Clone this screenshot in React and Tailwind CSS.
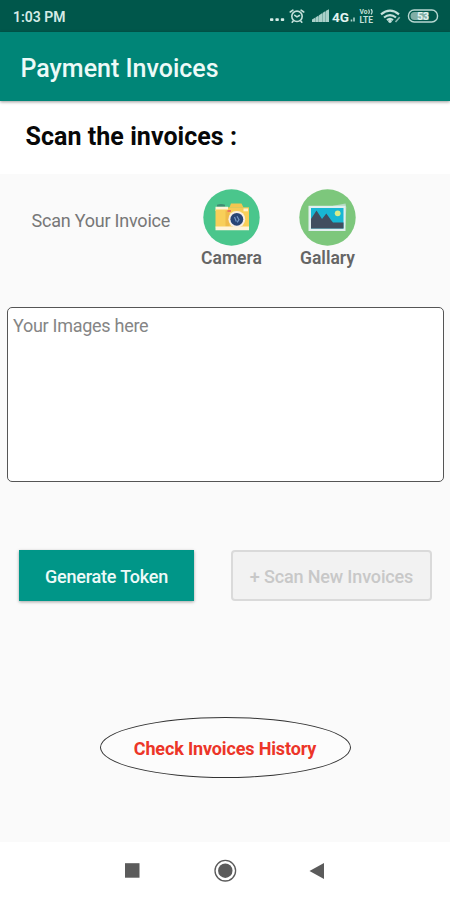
import React from 'react';

// Small system icons on the right of the status bar
function StatusIcons() {
  return (
    <svg width="170" height="20" viewBox="0 0 170 20" fill="none" className="font-['Roboto',sans-serif]">
      {/* notification dots */}
      <g fill="#d5ebe6">
        <rect x="1" y="9.3" width="3.4" height="2.8" rx="0.8" />
        <rect x="6.4" y="9.3" width="3.4" height="2.8" rx="0.8" />
        <rect x="11.8" y="9.3" width="3.4" height="2.8" rx="0.8" />
      </g>
      {/* alarm */}
      <g stroke="#c3e0da" strokeWidth="1.6" strokeLinecap="round">
        <circle cx="28" cy="7.3" r="5.2" />
        <path d="M25.8 6.3l2.2 1.6 2.4-1.4M21.3 3l2.6-1.9M34.7 3l-2.6-1.9M24.2 12l-1 1.2M31.8 12l1 1.2" />
      </g>
      {/* signal bars */}
      <path d="M43 13v-2.6l3-1.7V13zM46.5 13V8.4l3-1.9V13zM50 13V6.2l3-1.9V13zM53.5 13V4l3-1.9V13zM57 13V1.8l3-1.6V13z" fill="#a9d0c9" />
      <path d="M43 13v-1.5L60 1v12z" fill="#a9d0c9" fillOpacity="0.5" />
      <text x="63" y="12.5" fontSize="13.5" fontWeight="700" fill="#e3f3f0" textLength="17" lengthAdjust="spacingAndGlyphs">4G</text>
      <path d="M82.5 12.5v-2M85 12.5v-4" stroke="#a9d0c9" strokeWidth="1.6" />
      {/* VoLTE badge */}
      <text x="90.5" y="5" fontSize="6.5" fontWeight="700" fill="#c3e0da" textLength="8" lengthAdjust="spacingAndGlyphs">Vo</text>
      <path d="M99.5 0.5q1.6 2.2 0 4.4M102 0q2.2 2.7 0 5.4" stroke="#c3e0da" strokeWidth="1.2" />
      <text x="90.5" y="13.6" fontSize="8.5" fontWeight="700" fill="#c3e0da" textLength="13.5" lengthAdjust="spacingAndGlyphs">LTE</text>
      {/* wifi */}
      <g stroke="#c3e0da" strokeWidth="2.2">
        <path d="M112 5.4Q121 -2 130 5.4" />
        <path d="M115 8.5Q121 3.7 127 8.5" />
        <path d="M118 11.2Q121 8.7 124 11.2" />
        <path d="M126.5 13l4.2-4.8" strokeWidth="1.6" strokeOpacity="0.7" />
      </g>
      <circle cx="121" cy="12.3" r="1.7" fill="#c3e0da" />
      {/* battery */}
      <rect x="139.5" y="1" width="29" height="12" rx="5.6" stroke="#b8d8d2" strokeWidth="1.4" />
      <path d="M145.5 3h14v8h-14a4 4 0 0 1 0-8z" fill="#80aea6" />
      <text x="148" y="11" fontSize="11" fontWeight="700" fill="#e3f3f0" textLength="12" lengthAdjust="spacingAndGlyphs">53</text>
    </svg>
  );
}

function CameraIcon() {
  return (
    <svg width="57" height="57" viewBox="0 0 57 57">
      <circle cx="28.5" cy="28.5" r="28.2" fill="#4ac68c" />
      <path d="M14 15.8q4-1.6 8 0v2h-8z" fill="#3f8c72" />
      <path d="M26.5 18.5l1.5-4h10.5l2 4z" fill="#f2c650" />
      <path d="M12.5 17.8H25V21h-3v1H12.5z" fill="#fff4d9" />
      <rect x="12.5" y="20.5" width="33.5" height="18" fill="#f8cf59" />
      <path d="M25 18.3h21v3.2H25z" fill="#f6ca57" />
      <path d="M22.5 21.5h4v16h-4z" fill="#efbb4a" />
      <path d="M12.5 37.5H46v3.8H12.5z" fill="#fff4d9" />
      <rect x="24.5" y="21" width="3.5" height="2" fill="#ec765b" />
      <rect x="40.5" y="19.5" width="4.5" height="2.8" fill="#fff1c9" />
      <circle cx="33.8" cy="30.3" r="8.4" fill="#f8eee2" />
      <circle cx="33.8" cy="30.3" r="6.4" fill="#294575" />
      <path d="M31.5 28l1.8 4.5M34 27.2l2 3.5-1.8 2.6" fill="none" stroke="#7397c4" strokeWidth="1.2" />
    </svg>
  );
}

function GalleryIcon() {
  return (
    <svg width="57" height="57" viewBox="0 0 57 57">
      <circle cx="28.5" cy="28.5" r="28.2" fill="#7dc77c" />
      <path d="M34 16.8l12.5-2.3.8 4-1 18z" fill="#b5dbc4" />
      <rect x="9.5" y="16.8" width="37" height="25.2" fill="#e1efef" />
      <rect x="12" y="19" width="32.5" height="20.5" fill="#18b7d3" />
      <circle cx="38.7" cy="24.3" r="2.9" fill="#d6ec8a" />
      <path d="M12 39.5V30l5.5-8.5 5.5 8.5 4.3-5.5 4.7 6.5 2 2.5h10.5v6z" fill="#414e5f" />
    </svg>
  );
}

function ScanSource({ icon, label }) {
  return (
    <button className="flex w-[76px] flex-col items-center">
      {icon}
      <span className="text-[17.5px] leading-6 font-semibold text-[#656565]">{label}</span>
    </button>
  );
}

export default function App() {
  return (
    <div className="flex h-[900px] w-[450px] flex-col overflow-hidden bg-[#fafafa] font-['Roboto',sans-serif]">
      {/* Status bar */}
      <div className="flex h-8 shrink-0 items-start justify-between bg-[#00574b] pl-[13px] pr-[11px]">
        <span className="pt-[7px] text-[14px] leading-5 font-semibold text-[#d5ebe6]">1:03 PM</span>
        <div className="pt-[9px]">
          <StatusIcons />
        </div>
      </div>

      {/* App bar */}
      <header className="z-10 flex h-[69px] shrink-0 items-center bg-[#008577] pt-[5px] pl-[20.5px] shadow-[0_1px_3px_rgba(0,0,0,0.4)]">
        <h1 className="text-[25px] font-medium text-[#edfaf8]">Payment Invoices</h1>
      </header>

      <div className="flex h-[73px] shrink-0 items-center bg-white pb-[2px] pl-[25.5px]">
        <h2 className="text-[25px] font-bold tracking-[0.05px] text-[#080808]">Scan the invoices :</h2>
      </div>

      <main className="flex flex-1 flex-col">
        <div className="flex h-[133px] shrink-0 items-start pt-[15px] pl-[31.5px]">
          <p className="w-[162px] pt-[20px] text-[18px] leading-6 tracking-[-0.22px] text-[#777777]">Scan Your Invoice</p>
          <div className="flex gap-5">
            <ScanSource icon={<CameraIcon />} label="Camera" />
            <ScanSource icon={<GalleryIcon />} label="Gallary" />
          </div>
        </div>

        <div className="mr-[6px] ml-[7px] h-[175px] shrink-0 rounded-[5px] border border-[#555555] bg-white px-[5px] pt-[6px]">
          <p className="text-[18px] leading-6 tracking-[-0.28px] text-[#858585]">Your Images here</p>
        </div>

        <div className="mt-[68px] flex h-[51px] shrink-0 justify-between pr-[18px] pl-[19px]">
          <button className="w-[175px] bg-[#009688] pt-px text-[18px] font-medium tracking-[-0.2px] text-[#edfaf8] shadow-[0_1px_3px_rgba(0,0,0,0.35)]">
            Generate Token
          </button>
          <button className="w-[201px] rounded-[4px] border-2 border-[#dadada] bg-[#f2f2f2] pt-px text-[18px] font-medium tracking-[-0.15px] text-[#c8c8c8]">
            + Scan New Invoices
          </button>
        </div>

        <button className="mx-auto mt-[116px] h-[61px] w-[251px] shrink-0 rounded-[50%] border border-[#333333] bg-[#fcfcfc] pt-[2px] text-[18px] font-bold tracking-[-0.15px] text-[#ec3528]">
          Check Invoices History
        </button>
      </main>

      {/* Android navigation bar */}
      <nav className="flex h-[58px] shrink-0 items-center justify-center bg-white">
        <svg width="202" height="24" viewBox="0 0 202 24">
          <rect x="1" y="4.2" width="14.5" height="14.5" fill="#5b5b5b" />
          <circle cx="101.3" cy="11.7" r="10.3" fill="none" stroke="#5b5b5b" strokeWidth="1.3" />
          <circle cx="101.3" cy="11.7" r="7.2" fill="#5b5b5b" />
          <path d="M200 4v16L185.5 12z" fill="#5b5b5b" />
        </svg>
      </nav>
    </div>
  );
}
